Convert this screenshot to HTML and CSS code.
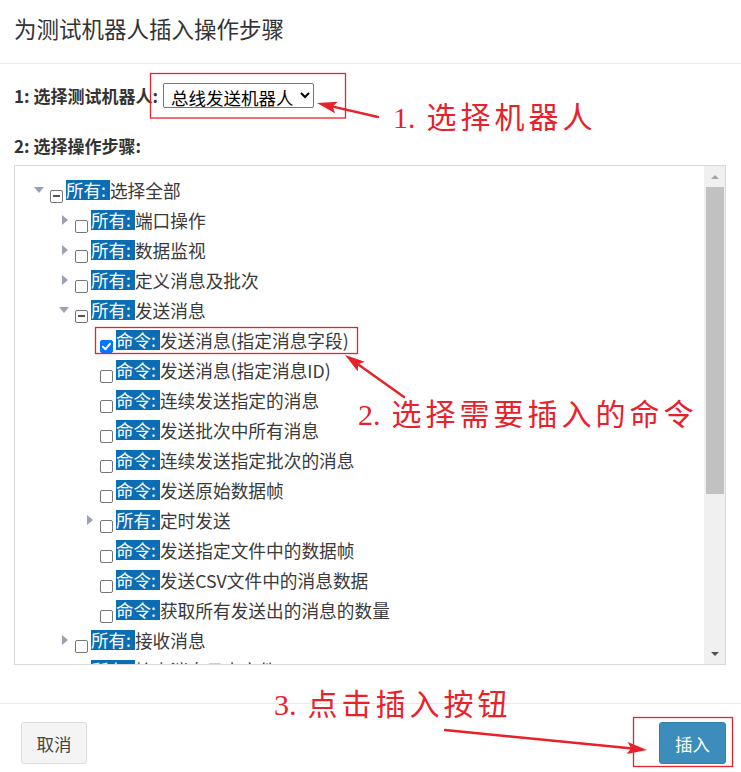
FILE: index.html
```html
<!DOCTYPE html>
<html lang="zh-CN">
<head>
<meta charset="utf-8">
<title>为测试机器人插入操作步骤</title>
<link rel="stylesheet" href="styles.css">
</head>
<body>
<div class="modal">
  <div class="modal-header">
    <h4 class="modal-title">为测试机器人插入操作步骤</h4>
  </div>
  <div class="modal-body">
    <div class="field-row">
      <label class="field-label">1: 选择测试机器人:</label>
      <select class="robot-select">
        <option>总线发送机器人</option>
      </select>
    </div>
    <div class="field-row second">
      <label class="field-label">2: 选择操作步骤:</label>
    </div>
    <div class="tree-box">
      <div class="tree">
        <div class="node l0"><span class="tog down"></span><span class="cb part"></span><span class="tag">所有:</span><span class="txt">选择全部</span></div>
        <div class="node l1"><span class="tog right"></span><span class="cb"></span><span class="tag">所有:</span><span class="txt">端口操作</span></div>
        <div class="node l1"><span class="tog right"></span><span class="cb"></span><span class="tag">所有:</span><span class="txt">数据监视</span></div>
        <div class="node l1"><span class="tog right"></span><span class="cb"></span><span class="tag">所有:</span><span class="txt">定义消息及批次</span></div>
        <div class="node l1"><span class="tog down"></span><span class="cb part"></span><span class="tag">所有:</span><span class="txt">发送消息</span></div>
        <div class="node l2"><span class="tog"></span><span class="cb on"><svg viewBox="0 0 13 13" width="13" height="13"><path d="M3 6.8 L5.5 9.2 L10 3.8" fill="none" stroke="#fff" stroke-width="2" stroke-linecap="round" stroke-linejoin="round"/></svg></span><span class="tag">命令:</span><span class="txt">发送消息(指定消息字段)</span></div>
        <div class="node l2"><span class="tog"></span><span class="cb"></span><span class="tag">命令:</span><span class="txt">发送消息(指定消息ID)</span></div>
        <div class="node l2"><span class="tog"></span><span class="cb"></span><span class="tag">命令:</span><span class="txt">连续发送指定的消息</span></div>
        <div class="node l2"><span class="tog"></span><span class="cb"></span><span class="tag">命令:</span><span class="txt">发送批次中所有消息</span></div>
        <div class="node l2"><span class="tog"></span><span class="cb"></span><span class="tag">命令:</span><span class="txt">连续发送指定批次的消息</span></div>
        <div class="node l2"><span class="tog"></span><span class="cb"></span><span class="tag">命令:</span><span class="txt">发送原始数据帧</span></div>
        <div class="node l2"><span class="tog right"></span><span class="cb"></span><span class="tag">所有:</span><span class="txt">定时发送</span></div>
        <div class="node l2"><span class="tog"></span><span class="cb"></span><span class="tag">命令:</span><span class="txt">发送指定文件中的数据帧</span></div>
        <div class="node l2"><span class="tog"></span><span class="cb"></span><span class="tag">命令:</span><span class="txt">发送CSV文件中的消息数据</span></div>
        <div class="node l2"><span class="tog"></span><span class="cb"></span><span class="tag">命令:</span><span class="txt">获取所有发送出的消息的数量</span></div>
        <div class="node l1"><span class="tog right"></span><span class="cb"></span><span class="tag">所有:</span><span class="txt">接收消息</span></div>
        <div class="node l1"><span class="tog right"></span><span class="cb"></span><span class="tag">所有:</span><span class="txt">检查消息日志文件</span></div>
      </div>
      <div class="sbar">
        <div class="sb-btn"><span class="sb-up"></span></div>
        <div class="sb-thumb"></div>
        <div class="sb-fill"></div>
        <div class="sb-btn"><span class="sb-down"></span></div>
      </div>
    </div>
  </div>
  <div class="modal-footer">
    <button class="btn btn-default">取消</button>
    <button class="btn btn-primary">插入</button>
  </div>
</div>

<svg class="marks" width="741" height="772" viewBox="0 0 741 772">
  <defs>
    <marker id="ah" markerUnits="userSpaceOnUse" markerWidth="22" markerHeight="14" refX="8" refY="6" orient="auto">
      <path d="M0,0 L20,6 L0,12 L4,6 Z" fill="#e8212a"/>
    </marker>
  </defs>
  <g fill="none" stroke="#e8212a" stroke-width="1.3">
    <rect x="150.5" y="73.5" width="195" height="44.5"/>
    <rect x="95.5" y="327.5" width="262" height="26"/>
    <rect x="633.5" y="717.5" width="99" height="49"/>
  </g>
  <g stroke="#e8212a" stroke-width="2.4" stroke-linecap="round">
    <line x1="378" y1="117" x2="328.7" y2="105.7" marker-end="url(#ah)"/>
    <line x1="404" y1="397" x2="354.8" y2="362" marker-end="url(#ah)"/>
    <line x1="445" y1="730" x2="635.1" y2="748.8" marker-end="url(#ah)"/>
  </g>
</svg>
<div class="note note-1"><span class="num">1.</span>选择机器人</div>
<div class="note note-2"><span class="num">2.</span>选择需要插入的命令</div>
<div class="note note-3"><span class="num">3.</span>点击插入按钮</div>
</body>
</html>
```

FILE: styles.css
```css
* { box-sizing: border-box; }
html, body {
  margin: 0;
  padding: 0;
  background: #fff;
}
body {
  width: 741px;
  height: 772px;
  position: relative;
  overflow: hidden;
  font-family: "Noto Sans CJK SC", "Noto Sans", sans-serif;
  color: #333;
}
.modal {
  display: flex;
  flex-direction: column;
  width: 741px;
  height: 772px;
}
.modal-header {
  height: 64px;
  border-bottom: 1px solid #e9e9e9;
  display: flex;
  align-items: center;
  padding: 0 14px 8px;
}
.modal-title {
  margin: 0;
  font-size: 22.5px;
  font-weight: normal;
  line-height: 26px;
  color: #333;
}
.modal-body {
  padding: 19px 15px 38px 14px;
}
.field-row {
  display: flex;
  align-items: center;
  height: 25px;
}
.field-row.second {
  margin-top: 28px;
  height: 20px;
}
.field-label {
  font-size: 17px;
  font-weight: bold;
  line-height: 20px;
  color: #333;
  margin-right: 5px;
}
.robot-select {
  width: 151px;
  height: 25px;
  font-family: "Noto Sans CJK SC", sans-serif;
  font-size: 17.5px;
  color: #000;
  background: #fff;
  border: 1px solid #767676;
  border-radius: 2px;
  padding: 0 0 0 3px;
  margin: 0;
}
.tree-box {
  margin-top: 9px;
  height: 500px;
  border: 1px solid #d9d9d9;
  display: flex;
}
.tree {
  flex: 1;
  overflow: hidden;
  padding-top: 9px;
}
.node {
  display: flex;
  align-items: center;
  height: 30px;
  white-space: nowrap;
}
.node.l0 { padding-left: 18px; }
.node.l1 { padding-left: 43px; }
.node.l2 { padding-left: 68px; }
.tog {
  width: 12px;
  height: 12px;
  display: flex;
  align-items: center;
  justify-content: center;
  flex: none;
}
.tog.down::before {
  content: "";
  border-left: 5px solid transparent;
  border-right: 5px solid transparent;
  border-top: 6px solid #98a2b3;
}
.tog.right::before {
  content: "";
  border-top: 5px solid transparent;
  border-bottom: 5px solid transparent;
  border-left: 6px solid #98a2b3;
  margin-left: 2px;
}
.cb {
  width: 13px;
  height: 13px;
  flex: none;
  margin: 12px 3px 0 5px;
  border: 1px solid #767676;
  border-radius: 2px;
  background: #fff;
  display: flex;
  align-items: center;
  justify-content: center;
}
.cb.part::after {
  content: "";
  width: 7px;
  height: 2px;
  background: #555;
}
.cb.on {
  background: #0075ff;
  border-color: #0075ff;
}
.cb.on svg { display: block; flex: none; }
.tag {
  display: inline-block;
  background: #0b6db4;
  color: #fff;
  font-size: 17.5px;
  line-height: 20px;
  height: 20px;
  padding-right: 4px;
}
.txt {
  font-size: 17.7px;
  line-height: 20px;
  color: #3a3a3a;
}
.sbar {
  width: 21px;
  flex: none;
  background: #f0f0f0;
  display: flex;
  flex-direction: column;
}
.sb-btn {
  height: 21px;
  display: flex;
  align-items: center;
  justify-content: center;
  flex: none;
}
.sb-up {
  border-left: 4px solid transparent;
  border-right: 4px solid transparent;
  border-bottom: 4px solid #a3a3a3;
}
.sb-down {
  border-left: 4px solid transparent;
  border-right: 4px solid transparent;
  border-top: 4px solid #505050;
}
.sb-thumb {
  height: 307px;
  background: #c1c1c1;
  margin: 0 1px 0 2px;
  flex: none;
}
.sb-fill { flex: 1; }
.modal-footer {
  border-top: 1px solid #e9e9e9;
  padding: 18px 15px 0 21px;
  display: flex;
  justify-content: space-between;
  align-items: flex-start;
  flex: 1;
}
.btn {
  height: 42px;
  font-family: "Noto Sans CJK SC", sans-serif;
  font-size: 17.5px;
  border-radius: 3px;
  padding: 0;
  cursor: pointer;
}
.btn-default {
  width: 66px;
  background: #f4f4f4;
  border: 1px solid #ddd;
  color: #444;
}
.btn-primary {
  width: 67px;
  background: #3c8dbc;
  border: 1px solid #367fa9;
  color: #fff;
}
.marks {
  position: absolute;
  left: 0;
  top: 0;
  pointer-events: none;
}
.note {
  position: absolute;
  font-family: "Liberation Serif", "Noto Sans CJK SC", serif;
  font-size: 30px;
  line-height: 30px;
  letter-spacing: 4px;
  color: #e8212a;
  white-space: nowrap;
}
.note .num {
  letter-spacing: 0;
  margin-right: 11px;
}
.note-1 { left: 393px; top: 103px; }
.note-2 { left: 358px; top: 400px; }
.note-3 { left: 274px; top: 690px; }
```
